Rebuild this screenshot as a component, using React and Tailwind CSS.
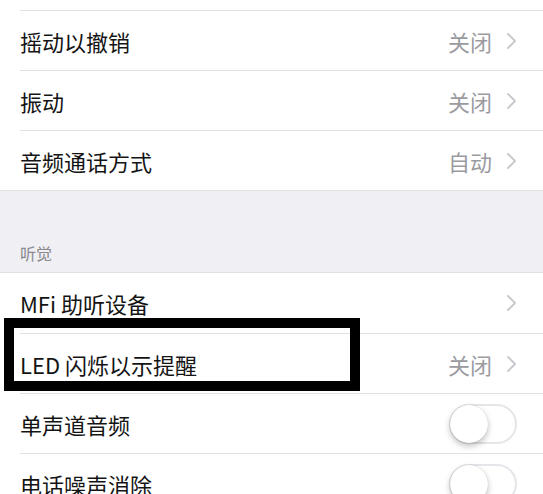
import React from "react";

const font = { fontFamily: '"Noto Sans CJK SC", "Noto Sans", sans-serif' };

function Chevron() {
  return (
    <svg width="11" height="18" viewBox="0 0 11 18" className="ml-[14px]">
      <path d="M2 2 L9 9 L2 16" fill="none" stroke="#c7c7cc" strokeWidth="1.8" strokeLinecap="round" strokeLinejoin="round" />
    </svg>
  );
}

function Toggle() {
  return (
    <div className="relative w-[68px] h-[40px] rounded-full border-2 border-[#e5e5ea] bg-white">
      <div className="absolute left-[-1px] top-[-1px] w-[38px] h-[38px] rounded-full bg-white shadow-[0_3px_6px_rgba(0,0,0,0.25),0_0_1px_rgba(0,0,0,0.2)]" />
    </div>
  );
}

function Row({ label, value, chevron, toggle, sep = true }) {
  return (
    <div className="h-[60px] pl-[20px] bg-white">
      <div className={`h-full flex items-center pr-[26px] ${sep ? "border-t border-[#e1e1e4]" : ""}`}>
        <span className="flex-1 text-[22px] text-[#141414] leading-none">{label}</span>
        {value && <span className="text-[22px] text-[#9b9b9f] leading-none">{value}</span>}
        {chevron && <Chevron />}
        {toggle && <Toggle />}
      </div>
    </div>
  );
}

export default function App() {
  return (
    <div className="relative w-[543px] h-[494px] overflow-hidden bg-white" style={font}>
      <div className="h-[10px] bg-white" />
      <Row label="摇动以撤销" value="关闭" chevron />
      <Row label="振动" value="关闭" chevron />
      <Row label="音频通话方式" value="自动" chevron />
      <div className="h-[83px] bg-[#efeff4] border-t border-[#e1e1e4] border-b flex items-end pl-[20px] pb-[11px]">
        <span className="text-[16px] text-[#8a8a8e] leading-none">听觉</span>
      </div>
      <Row label="MFi 助听设备" chevron sep={false} />
      <Row label="LED 闪烁以示提醒" value="关闭" chevron />
      <Row label="单声道音频" toggle />
      <Row label="电话噪声消除" toggle />
      <div className="absolute left-[4px] top-[318px] w-[356px] h-[73px] border-[10px] border-black" />
    </div>
  );
}
